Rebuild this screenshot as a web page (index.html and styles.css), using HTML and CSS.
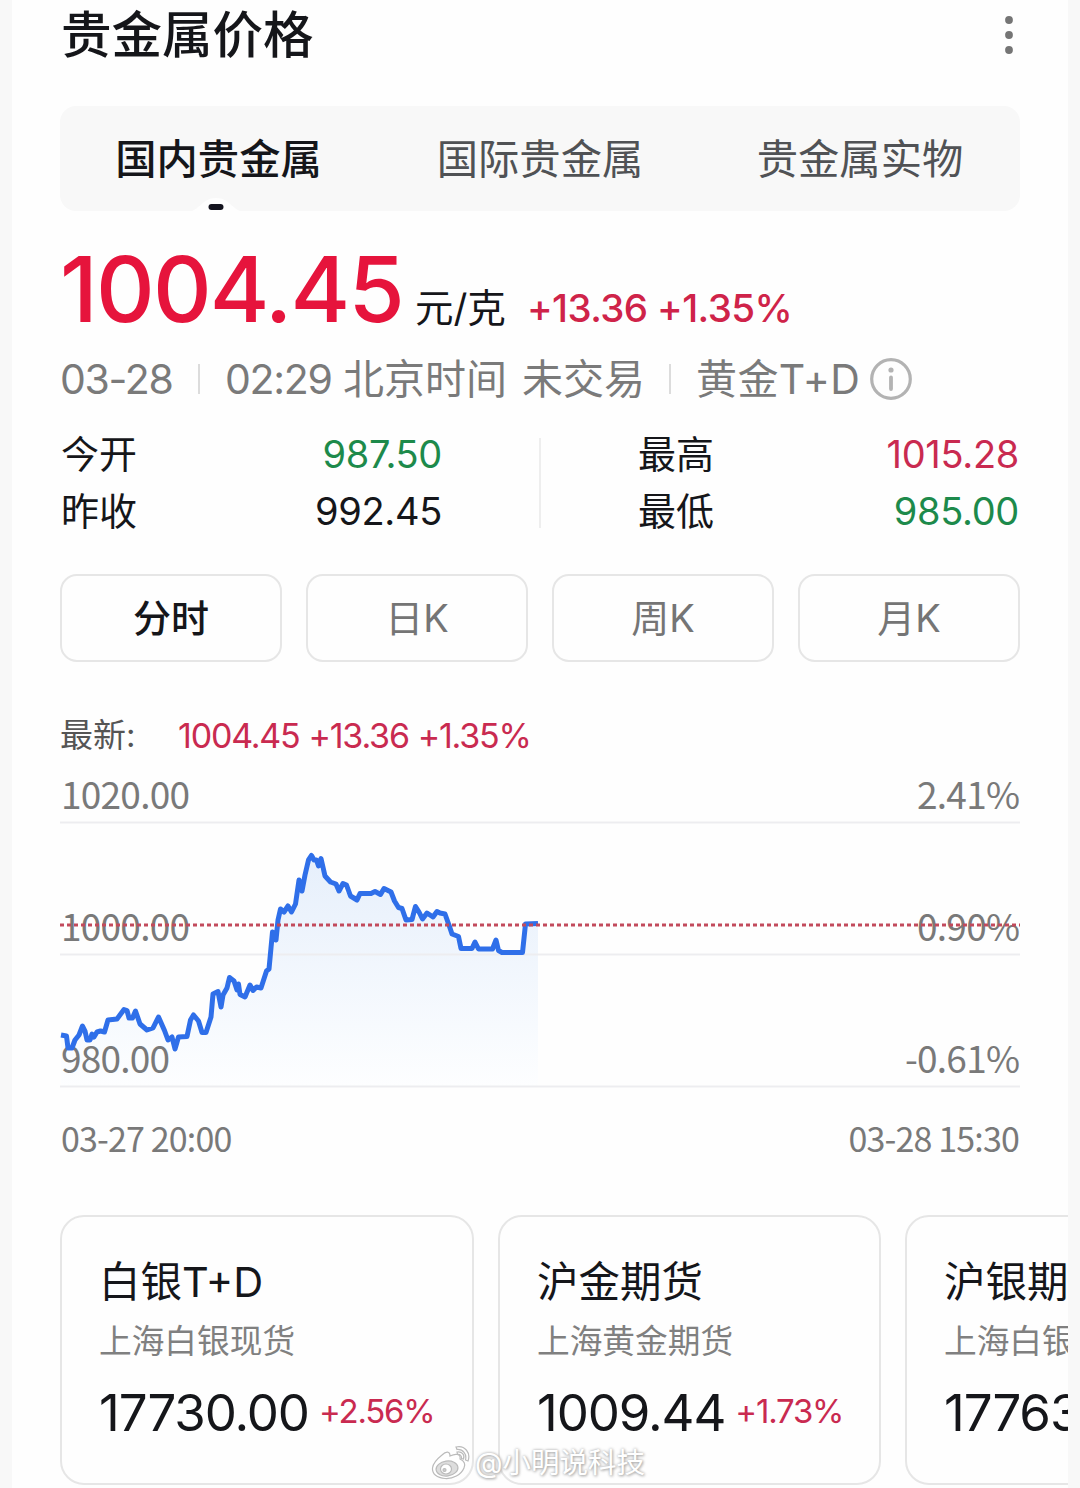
FILE: index.html
```html
<!DOCTYPE html>
<html lang="zh-CN">
<head>
    <meta charset="utf-8">
    <title>贵金属价格</title>
    <link rel="stylesheet" href="styles.css">
</head>
<body>
    <div class="page">
        <header class="header">
            <h1>贵金属价格</h1>
            <svg class="more" width="12" height="40" viewBox="0 0 12 40" fill="#757575">
                <circle cx="6" cy="5" r="3.9"/>
                <circle cx="6" cy="20" r="3.9"/>
                <circle cx="6" cy="35" r="3.9"/>
            </svg>
        </header>

        <nav class="tabs">
            <div class="tab active">国内贵金属
                <svg class="tab-mark" width="60" height="15" viewBox="0 0 60 15">
                    <path d="M0 15C14 15 15 1 30 1S46 15 60 15Z" fill="#fefefe"/>
                    <rect x="22.5" y="7" width="15" height="6" rx="3" fill="#14141f"/>
                </svg>
            </div>
            <div class="tab">国际贵金属</div>
            <div class="tab">贵金属实物</div>
        </nav>

        <div class="price-row">
            <span class="price">1004.45</span>
            <span class="unit">元/克</span>
            <span class="change">+13.36 +1.35%</span>
        </div>

        <div class="meta">
            <span class="meta-date">03-28</span>
            <i class="sep"></i>
            <span class="meta-time">02:29</span>
            <span class="meta-zone">北京时间</span>
            <span class="meta-state">未交易</span>
            <i class="sep"></i>
            <span class="meta-name">黄金T+D</span>
            <svg class="info" width="42" height="42" viewBox="0 0 42 42">
                <circle cx="21" cy="21" r="19.3" fill="none" stroke="#b3b3b3" stroke-width="3.2"/>
                <circle cx="21" cy="12" r="2.6" fill="#b3b3b3"/>
                <path d="M21 19.5V31" stroke="#b3b3b3" stroke-width="3.8" stroke-linecap="round"/>
            </svg>
        </div>

        <div class="stats">
            <dl class="stats-col">
                <div><dt>今开</dt><dd class="down">987.50</dd></div>
                <div><dt>昨收</dt><dd>992.45</dd></div>
            </dl>
            <dl class="stats-col">
                <div><dt>最高</dt><dd class="up">1015.28</dd></div>
                <div><dt>最低</dt><dd class="down">985.00</dd></div>
            </dl>
        </div>

        <div class="periods">
            <button type="button" class="period active">分时</button>
            <button type="button" class="period">日K</button>
            <button type="button" class="period">周K</button>
            <button type="button" class="period">月K</button>
        </div>

        <div class="latest">
            <span class="latest-label">最新:</span>
            <span class="latest-value">1004.45 +13.36 +1.35%</span>
        </div>

        <svg class="chart" width="960" height="340" viewBox="60 760 960 340">
            <defs>
                <linearGradient id="fill" x1="0" y1="0" x2="0" y2="1">
                    <stop offset="0" stop-color="#e6effb"/>
                    <stop offset="1" stop-color="#fdfeff"/>
                </linearGradient>
            </defs>
            <path fill="url(#fill)" d="M61 1086V1035L75 1040 82 1027 88 1040 104 1032 124 1009 147 1030 158 1017 175 1048 187 1036 193 1015 206 1032 213 994 229 977 245 997 261 988 269 970 281 909 295 905 311 855 325 876 350 896 384 888 391 892 406 920 437 911 445 914 461 948 522 952 526 924H538V1086Z"/>
            <g class="grid">
                <path d="M60 822.5H1020M60 954.5H1020M60 1086.5H1020"/>
            </g>
            <g class="axis">
                <text x="61" y="809" textLength="129">1020.00</text>
                <text x="61" y="941" textLength="129">1000.00</text>
                <text x="61" y="1073" textLength="109">980.00</text>
                <text x="917" y="809" textLength="103">2.41%</text>
                <text x="917" y="941" textLength="103">0.90%</text>
                <text x="905" y="1073" textLength="115">-0.61%</text>
            </g>
            <path class="line" d="M61 1035L66.500 1036 68 1048H72L75 1040 79 1035 82.500 1026 85 1031 87 1040H90L92 1034 94 1037 97 1032 100.500 1031 104.500 1032 108 1020 117 1019 124 1009.500 127 1010.500 129 1018H132.500L135.500 1011 140 1024 147 1030 153 1028 158.500 1017 164.500 1030.500 168 1040 172 1037 175 1049 178.500 1037 187 1036.500 190.500 1020 193.500 1015 198.500 1021 202 1032.500H206L211 1017 213 994 218 991.500 221 1007 223 995 227 988 229.500 977.500 234 981 237 990 238.500 984 240 994.500 245 997 250 985 253 990.500 256.500 987 261 988 266.500 971 269 969 272.500 932 276 940 278 920 280.500 909 284 912 288 906 291.500 912 295.500 904 299 880 302 891 305 875 308.500 860 311.500 855.500 314 860H316.500L318.500 866 321 858.500 325 876 330.500 882 336 884 339 891 343 883.500 346.500 885 350.500 896 357 900 360 893.500H371L375 891.500 380.500 894.500 384 888.500 391 892 394.500 901 398.500 907.500 402 908.500 406 920 412 919.500 415.500 906.500 419 912 422.500 919 427 913 433 917 437 911.500 440 913 445 914 449.500 926.500 452 934 458.500 936.500 461 948.500H472L475 942 478.500 949H492.500L496 940 498.500 950.500 502 952.500H522.500L525.500 924 538 923.500"/>
            <path class="current" d="M60 925H1020"/>
        </svg>

        <div class="dates">
            <span>03-27 20:00</span>
            <span>03-28 15:30</span>
        </div>

        <div class="cards">
            <div class="card card-wide">
                <h2>白银T+D</h2>
                <p>上海白银现货</p>
                <div class="quote"><b>17730.00</b><span>+2.56%</span></div>
            </div>
            <div class="card">
                <h2>沪金期货</h2>
                <p>上海黄金期货</p>
                <div class="quote"><b>1009.44</b><span>+1.73%</span></div>
            </div>
            <div class="card">
                <h2>沪银期货</h2>
                <p>上海白银期货</p>
                <div class="quote"><b>17763</b></div>
            </div>
        </div>
    </div>

    <div class="watermark">
        <svg width="40" height="36" viewBox="0 0 40 36" fill="#fff" stroke="#bbb" stroke-width="1.2">
            <path d="M11 10C15 6 19 6 19 11 25 8 30 9 29 14 33 16 35 19 33 23 30 30 22 34 14 33.500 6 33 1 29 1.500 23 2 18 6 14 11 10Z"/>
            <ellipse cx="16" cy="23.500" rx="11" ry="7.500" fill="#ddd" transform="rotate(-8 16 23.500)"/>
            <ellipse cx="15" cy="24" rx="5.500" ry="5"/>
            <circle cx="13.500" cy="25" r="1.500" fill="#ccc"/>
            <path d="M25 2C34 0 40 8 37 16L34.500 15C36 9 32 4 26 4.500Z"/>
            <path d="M26 7C31 6 34 10 32.500 14L30.500 13.500C31 11 29 9 26.500 9.500Z"/>
        </svg>
        <span>@小明说科技</span>
    </div>
</body>
</html>
```
FILE: styles.css
```css
* {
    box-sizing: border-box;
}

body {
    margin: 0;
    height: 1488px;
    overflow: hidden;
    position: relative;
    background: #f8f8f8;
    color: #15161a;
    font-family: Inter, "Noto Sans CJK SC", sans-serif;
}

h1, h2, p, dl, dd {
    margin: 0;
    font-weight: 400;
}

.page {
    width: 1056px;
    height: 1488px;
    margin-left: 12px;
    padding: 0 48px;
    background: #fefefe;
    overflow: hidden;
}

.header {
    display: flex;
    justify-content: space-between;
    align-items: center;
    height: 70px;
    padding: 0 5px 0 1px;
}

.header h1 {
    font-size: 50.5px;
    font-weight: 500;
    line-height: 70px;
}

.tabs {
    display: grid;
    grid-template-columns: repeat(3, 1fr);
    height: 105px;
    margin-top: 36px;
    border-radius: 16px;
    background: #f8f8f8;
}

.tab {
    position: relative;
    text-align: center;
    font-size: 41.3px;
    line-height: 106px;
    color: #505255;
}

.tab.active {
    padding-right: 3px;
    color: #15161a;
    font-weight: 500;
}

.tab-mark {
    position: absolute;
    left: 126px;
    bottom: 0;
}

.price-row {
    display: flex;
    align-items: baseline;
    height: 134px;
    line-height: 156px;
    white-space: nowrap;
}

.price {
    width: 355px;
    font-size: 91px;
    font-weight: 500;
    letter-spacing: -1.8px;
    color: #e6143c;
}

.unit {
    width: 112px;
    font-size: 38.5px;
}

.change {
    font-size: 38.5px;
    font-weight: 500;
    letter-spacing: -0.6px;
    color: #cf2349;
}

.meta {
    display: flex;
    align-items: center;
    height: 68px;
    font-size: 41px;
    line-height: 68px;
    white-space: nowrap;
    color: #7a7a7a;
}

.meta-date {
    width: 113px;
    letter-spacing: -1.3px;
}

.sep {
    width: 2px;
    height: 30px;
    margin: 0 25px;
    background: #dcdcdc;
}

.meta-time {
    width: 118px;
    letter-spacing: -1.3px;
}

.meta-zone {
    width: 179px;
}

.meta-state {
    width: 122px;
}

.meta-name {
    width: 174px;
    letter-spacing: 0.4px;
}

.stats {
    display: flex;
    align-items: center;
    margin-top: 13px;
    height: 114px;
    font-size: 38px;
    line-height: 57px;
}

.stats-col {
    width: 382px;
    padding-left: 1px;
}

.stats-col + .stats-col {
    width: 480px;
    margin-left: 97px;
    padding-left: 99px;
    background: linear-gradient(#eee, #eee) 0 50% / 2px 90px no-repeat;
}

.stats-col div {
    display: flex;
    justify-content: space-between;
}

.stats-col dd {
    letter-spacing: -0.3px;
}

.up {
    color: #c92a50;
}

.down {
    color: #1d8a4b;
}

.periods {
    display: flex;
    gap: 24px;
    margin-top: 34px;
}

.period {
    width: 222px;
    height: 88px;
    padding: 0 0 5px;
    border: 2px solid #e6e6e6;
    border-radius: 17px;
    background: none;
    font-family: inherit;
    font-size: 38px;
    color: #757575;
}

.period.active {
    font-weight: 500;
    color: #15161a;
}

.latest {
    display: flex;
    height: 60px;
    margin-top: 43px;
    font-size: 34px;
    line-height: 61px;
    white-space: nowrap;
}

.latest-label {
    width: 118px;
    font-size: 33px;
    color: #555;
}

.latest-value {
    letter-spacing: -1.2px;
    word-spacing: 0.5px;
    color: #c92a50;
}

.chart {
    display: block;
    margin-top: -5px;
    overflow: visible;
}

.grid path {
    stroke: #ededf0;
    stroke-width: 2;
}

.axis {
    font-family: "Noto Sans CJK SC", sans-serif;
    font-size: 37px;
    fill: #797979;
}

.line {
    fill: none;
    stroke: #2f6fe9;
    stroke-width: 5;
    stroke-linejoin: round;
}

.current {
    stroke: #c24a5c;
    stroke-width: 3;
    stroke-dasharray: 4 3;
}

.dates {
    display: flex;
    justify-content: space-between;
    height: 60px;
    margin-top: 7px;
    padding: 0 1px;
    font-family: "Noto Sans CJK SC", sans-serif;
    font-size: 34px;
    line-height: 61px;
    letter-spacing: -0.85px;
    color: #797979;
}

.cards {
    display: flex;
    gap: 24px;
    margin-top: 48px;
}

.card {
    flex: none;
    width: 383px;
    height: 270px;
    padding: 37px 37px 0;
    border: 2px solid #e6e6e6;
    border-radius: 24px;
    white-space: nowrap;
}

.card-wide {
    width: 414px;
}

.card h2 {
    font-size: 41.5px;
    line-height: 57px;
}

.card p {
    font-size: 32.7px;
    line-height: 60px;
    color: #808080;
}

.quote {
    display: flex;
    gap: 10px;
    line-height: 84px;
}

.quote b {
    font-size: 51px;
    font-weight: 400;
    letter-spacing: -1.1px;
}

.quote span {
    font-size: 33px;
    line-height: 80px;
    letter-spacing: -1.2px;
    color: #c92a50;
}

.watermark {
    position: absolute;
    left: 431px;
    top: 1442px;
    display: flex;
    align-items: center;
    gap: 4px;
    font-size: 28.5px;
    line-height: 42px;
    color: #fff;
    text-shadow: 0 0 3px #aaa, 1px 1px 3px #aaa;
}
```
